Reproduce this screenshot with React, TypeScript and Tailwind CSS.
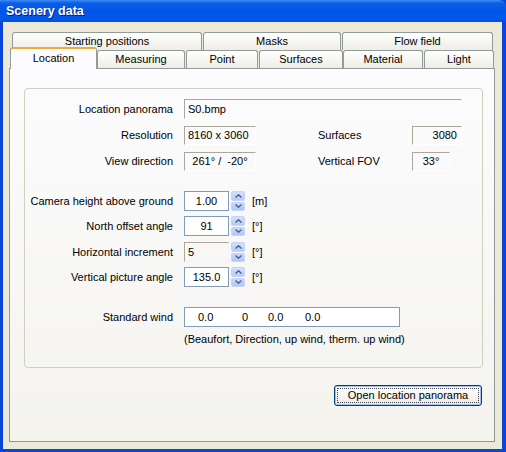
import React from 'react';

const Tab = ({ label, className }: { label: string; className: string }) => (
  <div
    className={`h-[18px] border border-b-0 border-[#919B9C] rounded-t-[3px] bg-gradient-to-b from-white to-[#EEEDE5] flex items-center justify-center ${className}`}
  >
    {label}
  </div>
);

const Spinner = () => (
  <div className="ml-[2px] w-[14px] h-[20px] flex flex-col gap-px">
    <div className="flex-1 rounded-[2px] bg-gradient-to-b from-[#D4E0FC] to-[#B6CBF8] border border-[#C4D3F6] flex items-center justify-center">
      <svg width="7" height="4" viewBox="0 0 7 4">
        <path d="M0.5 3.5 L3.5 0.8 L6.5 3.5" fill="none" stroke="#4D6185" strokeWidth="1.4" />
      </svg>
    </div>
    <div className="flex-1 rounded-[2px] bg-gradient-to-b from-[#C9D8FB] to-[#B0C6F7] border border-[#C4D3F6] flex items-center justify-center">
      <svg width="7" height="4" viewBox="0 0 7 4">
        <path d="M0.5 0.5 L3.5 3.2 L6.5 0.5" fill="none" stroke="#4D6185" strokeWidth="1.4" />
      </svg>
    </div>
  </div>
);

const SpinRow = ({
  label,
  value,
  unit,
  disabled,
  className,
}: {
  label: string;
  value: string;
  unit: string;
  disabled?: boolean;
  className: string;
}) => (
  <div className={`flex items-center h-[20px] ${className}`}>
    <div className="w-[148px] text-right">{label}</div>
    {disabled ? (
      <div className="ml-[11px] w-[45px] h-[20px] border border-t-[#ACA899] border-l-[#ACA899] border-b-[#F4F3EE] border-r-[#F4F3EE] flex items-center pl-[3px]">
        {value}
      </div>
    ) : (
      <div className="ml-[11px] w-[45px] h-[20px] border border-[#7F9DB9] bg-white flex items-center justify-center">
        {value}
      </div>
    )}
    <Spinner />
    <div className="ml-[7px]">{unit}</div>
  </div>
);

export default function App() {
  return (
    <div className="w-[506px] h-[452px] flex flex-col bg-[#0846D8] overflow-hidden font-['Liberation_Sans',Arial,sans-serif] text-[11px] leading-[13px] text-black">
      {/* title bar */}
      <div className="h-[22px] shrink-0 rounded-tr-[7px] bg-[linear-gradient(to_bottom,#3D8CF4_0%,#0B5EE6_14%,#0055E5_50%,#0059EB_86%,#0A4CD3_100%)] flex items-center pl-[6px]">
        <span className="text-white font-bold text-[12.5px] [text-shadow:1px_1px_#0A1883]">Scenery data</span>
      </div>

      {/* dialog body */}
      <div className="flex-1 ml-[3px] mr-[4px] mb-[3px] bg-[#ECE9D8] flex flex-col pt-[10px] pl-[6px] pr-[7px] pb-[7px]">
        {/* tab rows */}
        <div className="flex h-[18px] pl-[3px] gap-px">
          <Tab label="Starting positions" className="w-[190px]" />
          <Tab label="Masks" className="w-[138px]" />
          <Tab label="Flow field" className="w-[151px]" />
        </div>
        <div className="flex items-end h-[18px] pl-px">
          <div className="relative z-10 w-[87px] h-[22px] -mb-px border border-b-0 border-[#919B9C] border-t-2 border-t-[#F0A93C] rounded-t-[3px] bg-[#FCFCFE] flex items-center justify-center pb-[2px]">
            Location
          </div>
          <Tab label="Measuring" className="w-[88px]" />
          <Tab label="Point" className="ml-px w-[72px]" />
          <Tab label="Surfaces" className="ml-px w-[84px]" />
          <Tab label="Material" className="w-[80px]" />
          <Tab label="Light" className="ml-px w-[70px]" />
        </div>

        {/* tab page */}
        <div className="flex-1 border border-[#919B9C] bg-gradient-to-b from-[#FCFCFE] to-[#F4F3EE] flex flex-col pl-[14px] pt-[19px] pr-[12px]">
          <div className="w-[459px] h-[280px] border border-[#D0D0BF] rounded-[4px] flex flex-col pt-[10px]">
            <div className="flex items-center h-[20px]">
              <div className="w-[148px] text-right">Location panorama</div>
              <div className="ml-[11px] w-[278px] h-[20px] border border-t-[#ACA899] border-l-[#ACA899] border-b-white border-r-white flex items-center pl-[3px]">
                S0.bmp
              </div>
            </div>
            <div className="flex items-center h-[19px] mt-[7px]">
              <div className="w-[148px] text-right">Resolution</div>
              <div className="ml-[11px] w-[72px] h-[19px] border border-t-[#ACA899] border-l-[#ACA899] border-b-white border-r-white flex items-center pl-[3px]">
                8160 x 3060
              </div>
              <div className="ml-[62px] w-[94px]">Surfaces</div>
              <div className="w-[50px] h-[19px] border border-t-[#ACA899] border-l-[#ACA899] border-b-white border-r-white flex items-center justify-end pr-[4px]">
                3080
              </div>
            </div>
            <div className="flex items-center h-[19px] mt-[7px]">
              <div className="w-[148px] text-right">View direction</div>
              <div className="ml-[11px] w-[72px] h-[19px] border border-t-[#ACA899] border-l-[#ACA899] border-b-white border-r-white flex items-center justify-center whitespace-pre">
                {'261° /  -20°'}
              </div>
              <div className="ml-[62px] w-[94px]">Vertical FOV</div>
              <div className="w-[38px] h-[19px] border border-t-[#ACA899] border-l-[#ACA899] border-b-white border-r-white flex items-center justify-center">
                33°
              </div>
            </div>

            <SpinRow className="mt-[20px]" label="Camera height above ground" value="1.00" unit="[m]" />
            <SpinRow className="mt-[5px]" label="North offset angle" value="91" unit="[°]" />
            <SpinRow className="mt-[6px]" label="Horizontal increment" value="5" unit="[°]" disabled />
            <SpinRow className="mt-[5px]" label="Vertical picture angle" value="135.0" unit="[°]" />

            <div className="flex items-center h-[20px] mt-[20px]">
              <div className="w-[148px] text-right">Standard wind</div>
              <div className="ml-[11px] w-[216px] h-[20px] border border-[#7F9DB9] bg-white flex items-center">
                <span className="ml-[13px] w-[44px]">0.0</span>
                <span className="w-[26px]">0</span>
                <span className="w-[37px]">0.0</span>
                <span>0.0</span>
              </div>
            </div>
            <div className="mt-[6px] ml-[159px]">(Beaufort, Direction, up wind, therm. up wind)</div>
          </div>

          <div className="flex justify-end mt-[17px]">
            <button className="w-[148px] h-[21px] rounded-[3px] border border-[#003C74] bg-gradient-to-b from-white to-[#ECEBE6] shadow-[inset_0_0_0_1px_#A8C2F0] p-[2px]">
              <div className="h-full border border-dotted border-[#444] flex items-center justify-center">
                Open location panorama
              </div>
            </button>
          </div>
        </div>
      </div>
    </div>
  );
}
